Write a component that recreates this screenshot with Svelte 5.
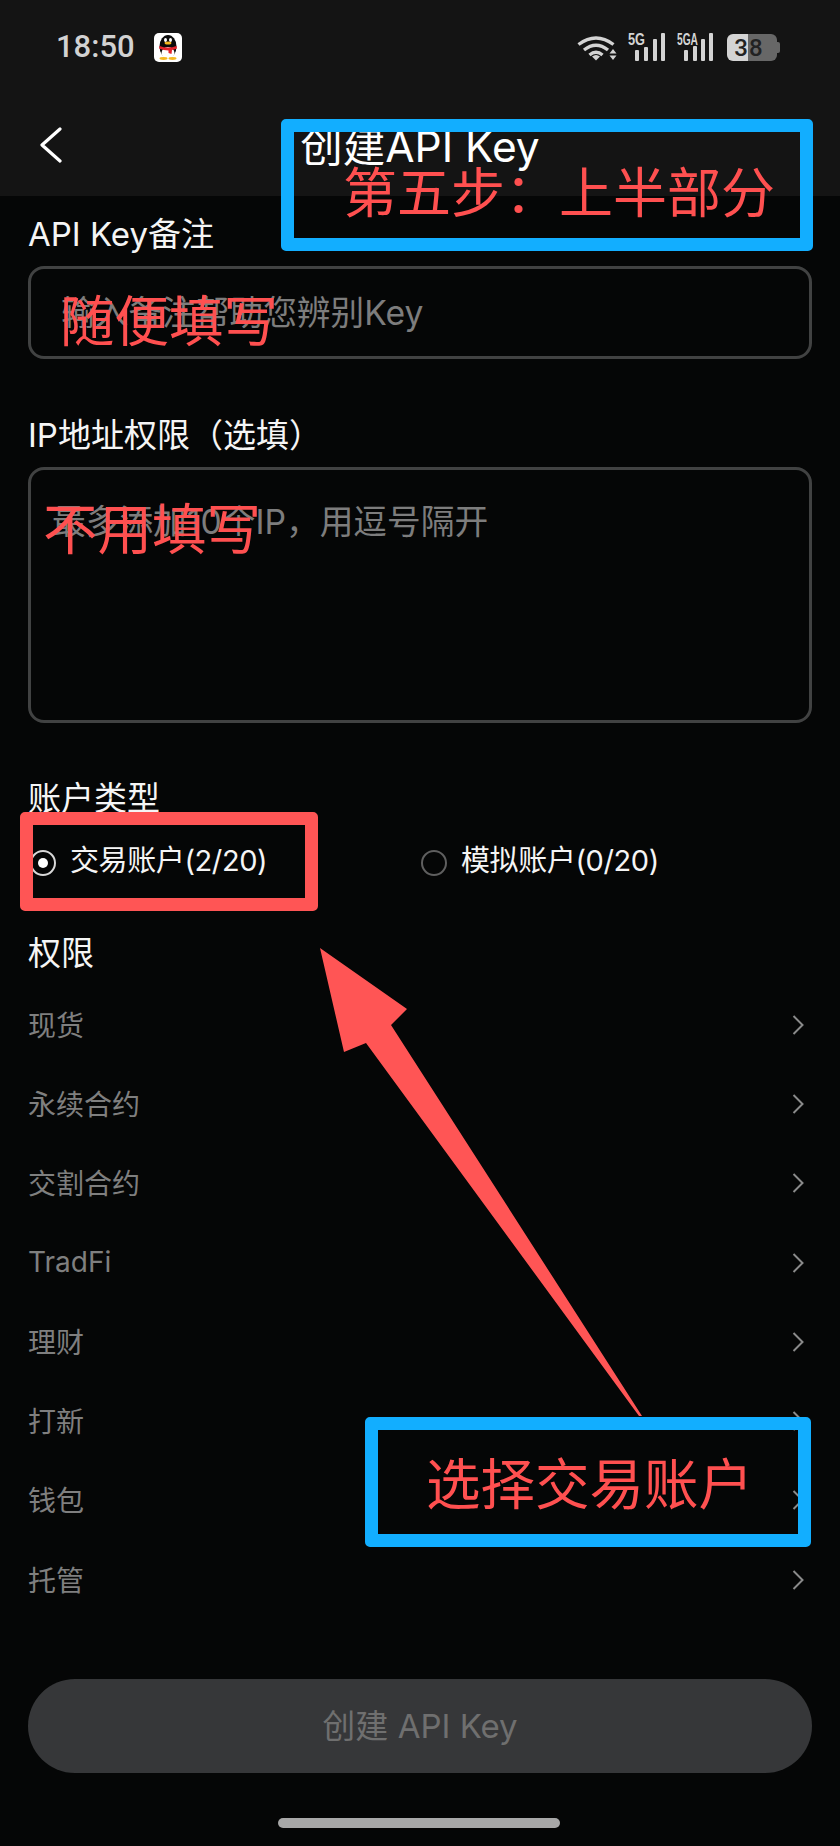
<script lang="ts">
  // API key creation screen with tutorial annotations drawn on top.
  const permissions = ['现货', '永续合约', '交割合约', 'TradFi', '理财', '打新', '钱包', '托管'];
</script>

<div class="page">
  <header class="head">
    <div class="status">
      <span class="time">18:50</span>
      <svg class="qq" viewBox="0 0 28 29" aria-hidden="true">
        <rect width="28" height="29" rx="5" fill="#fff" />
        <ellipse cx="14" cy="13.5" rx="8.5" ry="11.5" fill="#0b0b0b" />
        <ellipse cx="14" cy="20" rx="6.5" ry="6" fill="#fff" />
        <ellipse cx="11.5" cy="7" rx="1.5" ry="2" fill="#fff" />
        <ellipse cx="16.5" cy="7" rx="1.5" ry="2" fill="#fff" />
        <ellipse cx="14" cy="10" rx="3.4" ry="1.5" fill="#f5b81f" />
        <path d="M5.5 13q8.5 3 17 0l.5 2.5q-3 1.4-5 1.6l-.5 4-3-1.2V17.5q-4.5 0-9.5-2z" fill="#e5232b" />
        <ellipse cx="9.5" cy="25.5" rx="4" ry="1.4" fill="#f5b81f" />
        <ellipse cx="18.5" cy="25.5" rx="4" ry="1.4" fill="#f5b81f" />
      </svg>
      <span class="spacer"></span>
      <svg class="wifi" viewBox="0 0 40 28" aria-hidden="true">
        <g fill="none" stroke="#d4d4d4" stroke-width="3.4">
          <path d="M1.5 11.5Q19-1.5 36.5 11.5" />
          <path d="M7 17Q19 7.5 31 17" />
          <path d="M12.5 22Q19 16.5 25.5 22" />
        </g>
        <path d="M15 23.5L19 27.5 23 23.5Q19 20.5 15 23.5zM32.5 20.5L36 16 39.5 20.5zM32.5 22.5H39.5L36 27z" fill="#d4d4d4" />
      </svg>
      <svg class="signal" viewBox="0 0 37 28" aria-hidden="true">
        <text x="0" y="12" textLength="17" lengthAdjust="spacingAndGlyphs">5G</text>
        <rect x="7" y="17" width="4" height="11" rx="1" />
        <rect x="16" y="14" width="4" height="14" rx="1" />
        <rect x="25" y="6" width="4" height="22" rx="1" />
        <rect x="33" y="0" width="4" height="28" rx="1" />
      </svg>
      <svg class="signal" viewBox="0 0 36 28" aria-hidden="true">
        <text x="0" y="12" textLength="21" lengthAdjust="spacingAndGlyphs">5GA</text>
        <rect x="7" y="17" width="4" height="11" rx="1" />
        <rect x="16" y="13" width="4" height="15" rx="1" />
        <rect x="24" y="6" width="4" height="22" rx="1" />
        <rect x="32" y="0" width="4" height="28" rx="1" />
      </svg>
      <div class="battery">
        <span class="battery-num">38</span>
      </div>
    </div>
    <div class="nav">
      <svg class="back" viewBox="0 0 24 36" aria-hidden="true">
        <path d="M21 2L3 18 21 34" fill="none" stroke="#fff" stroke-width="3.2" stroke-linecap="round" stroke-linejoin="round" />
      </svg>
      <h1>创建API Key</h1>
    </div>
  </header>

  <main class="form">
    <label class="label first" for="note">API Key备注</label>
    <input id="note" class="field" placeholder="输入备注帮助您辨别Key" />

    <label class="label ip" for="ips">IP地址权限（选填）</label>
    <textarea id="ips" class="field area" placeholder="最多添加10个IP，用逗号隔开"></textarea>

    <div class="label type">账户类型</div>
    <div class="radios">
      <div class="radio">
        <span class="dot on"></span>
        <span class="radio-text">交易账户(2/20)</span>
      </div>
      <div class="radio">
        <span class="dot"></span>
        <span class="radio-text">模拟账户(0/20)</span>
      </div>
    </div>

    <div class="label perm">权限</div>
    <ul class="rows">
      {#each permissions as name}
        <li>
          <span class="row-name">{name}</span>
          <svg viewBox="0 0 12 20" aria-hidden="true">
            <path d="M1.5 1L10.5 10 1.5 19" fill="none" stroke="#8a8a8a" stroke-width="2" />
          </svg>
        </li>
      {/each}
    </ul>

    <button type="button" class="submit">创建 API Key</button>
    <div class="home"></div>
  </main>

  <!-- tutorial annotations -->
  <div class="mark blue step"></div>
  <div class="note step-text">第五步：上半部分</div>
  <div class="note fill-text">随便填写</div>
  <div class="note skip-text">不用填写</div>
  <div class="mark red pick"></div>
  <svg class="arrow" viewBox="0 0 840 1846" aria-hidden="true">
    <path d="M320 948L407 1009 391 1025 642 1416 639 1416 366 1043 344 1052z" fill="#ff5555" />
  </svg>
  <div class="mark blue pick-note"></div>
  <div class="note pick-text">选择交易账户</div>
</div>

<style>
  :global(body) {
    margin: 0;
    background: #050606;
  }
  .page {
    position: relative;
    width: 840px;
    height: 1846px;
    overflow: hidden;
    background: #050606;
    color: #f5f5f5;
    font-family: Inter, "Noto Sans CJK SC", sans-serif;
  }
  .head {
    height: 196px;
    background: #141414;
  }
  .status {
    height: 96px;
    box-sizing: border-box;
    padding: 33px 60px 0 56px;
    display: flex;
    align-items: flex-start;
  }
  .time {
    font-family: Roboto, sans-serif;
    font-size: 31px;
    font-weight: 500;
    line-height: 28px;
    color: #d2d2d2;
  }
  .qq {
    width: 28px;
    height: 29px;
    margin-left: 19px;
  }
  .spacer {
    flex: 1;
  }
  .wifi {
    width: 40px;
    height: 28px;
  }
  .signal {
    height: 28px;
    width: 37px;
    margin-left: 11px;
    fill: #d4d4d4;
    overflow: visible;
  }
  .signal + .signal {
    width: 36px;
    margin-left: 12px;
  }
  .signal text {
    font-family: "Liberation Sans", sans-serif;
    font-size: 16px;
    font-weight: 700;
  }
  .battery {
    width: 50px;
    height: 27px;
    margin: 1px 3px 0 14px;
    border-radius: 6px;
    background: linear-gradient(90deg, #d4d4d4 0 21px, #676767 21px);
    display: flex;
    align-items: center;
    justify-content: center;
    position: relative;
  }
  .battery::after {
    content: "";
    position: absolute;
    right: -3px;
    top: 8px;
    width: 3px;
    height: 11px;
    border-radius: 0 2px 2px 0;
    background: #676767;
  }
  .battery-num {
    font-family: Roboto, sans-serif;
    font-size: 24px;
    font-weight: 500;
    letter-spacing: 1px;
    color: #222;
    margin-left: -6px;
  }
  .nav {
    position: relative;
    height: 100px;
    display: flex;
    align-items: center;
    justify-content: center;
  }
  .back {
    position: absolute;
    left: 39px;
    top: 31px;
    width: 24px;
    height: 36px;
  }
  h1 {
    margin: 2px 0 0;
    font-size: 42.5px;
    font-weight: 400;
    line-height: 40px;
    color: #fff;
  }
  .form {
    padding: 0 28px;
    display: flex;
    flex-direction: column;
  }
  .label {
    font-size: 33px;
    line-height: 40px;
    height: 40px;
    white-space: nowrap;
    color: #f5f5f5;
  }
  .first {
    margin: 18px 0 12px;
  }
  .ip {
    margin: 56px 0 12px;
  }
  .type {
    margin: 55px 0 20px;
  }
  .perm {
    margin: 45px 0 12px;
  }
  .field {
    display: block;
    box-sizing: border-box;
    width: 784px;
    height: 93px;
    margin: 0;
    padding: 0 30px;
    border: 3px solid #414242;
    border-radius: 16px;
    background: transparent;
    color: #f5f5f5;
    font-family: inherit;
    font-size: 33.7px;
    outline: none;
  }
  .area {
    height: 256px;
    padding: 30px 21px;
    line-height: 44px;
    resize: none;
  }
  .field::placeholder {
    color: #7d7d7d;
    opacity: 1;
  }
  .radios {
    height: 50px;
    margin-left: 2px;
    display: flex;
  }
  .radio {
    width: 391px;
    display: flex;
    align-items: center;
    gap: 14px;
    font-size: 29px;
    white-space: nowrap;
  }
  .radio-text {
    margin-bottom: 10px;
    letter-spacing: -0.4px;
  }
  .dot {
    position: relative;
    box-sizing: border-box;
    width: 26px;
    height: 26px;
    border: 2px solid #5f5f5f;
    border-radius: 50%;
  }
  .dot.on {
    border-color: #d8d8d8;
  }
  .dot.on::after {
    content: "";
    position: absolute;
    inset: 6px;
    border-radius: 50%;
    background: #fff;
  }
  .rows {
    margin: 0;
    padding: 0;
    list-style: none;
  }
  .rows li {
    height: 79.3px;
    display: flex;
    align-items: center;
    justify-content: space-between;
    padding-right: 8px;
    font-size: 28px;
    color: #7f7f7f;
  }
  .row-name {
    margin-bottom: 2px;
  }
  .rows svg {
    width: 12px;
    height: 20px;
  }
  .submit {
    width: 784px;
    height: 94px;
    margin-top: 60px;
    padding: 0 0 4px;
    border: none;
    border-radius: 47px;
    background: #363739;
    color: #6f6f6f;
    font-family: inherit;
    font-size: 33px;
  }
  .home {
    width: 282px;
    height: 10px;
    margin: 45px 0 0 250px;
    border-radius: 5px;
    background: #a8a8a8;
  }
  .mark {
    position: absolute;
    box-sizing: border-box;
    border-radius: 5px;
    border: 13px solid;
  }
  .blue {
    border-color: #12aeff;
  }
  .red {
    border-color: #ff5555;
  }
  .step {
    left: 281px;
    top: 119px;
    width: 532px;
    height: 132px;
  }
  .pick {
    left: 20px;
    top: 812px;
    width: 298px;
    height: 99px;
  }
  .pick-note {
    left: 365px;
    top: 1417px;
    width: 446px;
    height: 130px;
  }
  .arrow {
    position: absolute;
    left: 0;
    top: 0;
    width: 840px;
    height: 1846px;
    pointer-events: none;
  }
  .note {
    position: absolute;
    font-size: 54.5px;
    line-height: 54px;
    color: #ff5050;
    white-space: nowrap;
  }
  .step-text {
    left: 343px;
    top: 167px;
    font-size: 54px;
  }
  .fill-text {
    left: 60px;
    top: 294px;
  }
  .skip-text {
    left: 43px;
    top: 502px;
  }
  .pick-text {
    left: 426px;
    top: 1457px;
  }
</style>
